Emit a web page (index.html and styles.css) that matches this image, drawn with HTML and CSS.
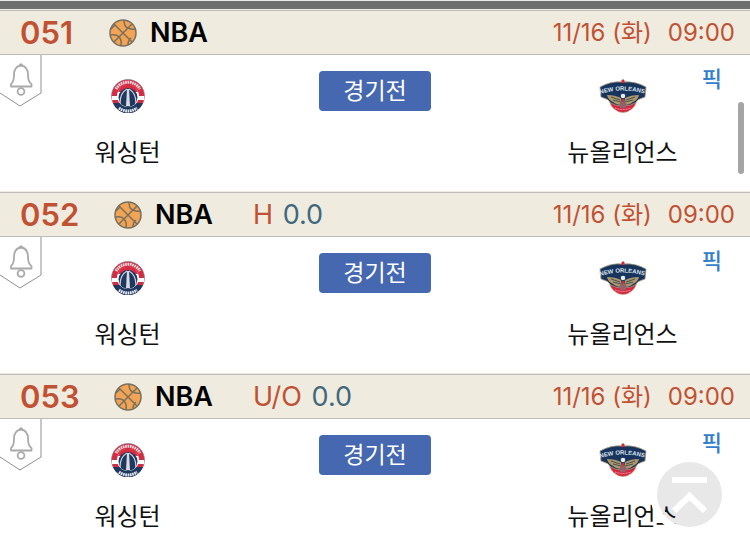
FILE: index.html
```html
<!DOCTYPE html>
<html lang="ko">
  <head>
    <meta charset="utf-8">
    <meta name="viewport" content="width=device-width, initial-scale=1">
    <title>NBA</title>
    <link rel="stylesheet" href="styles.css">
  </head>
  <body>
    <svg class="sprite" aria-hidden="true">
      <symbol id="ball" viewBox="0 0 28 28">
        <circle cx="14" cy="14" r="13" fill="#f2a353" stroke="#77705f" stroke-width="1.5"/>
        <path d="M5 5l18 18M23 5L5 23M15 1q0 7 4 8q4 2 8 1M1 16q7-1 9 2q3 3 2 9M2 10l4-4M19 26q0-5 3-7" fill="none" stroke="#77705f" stroke-width="1.5"/>
      </symbol>
      <symbol id="bell" viewBox="0 0 43 53">
        <path d="M0 38L20 51L41 38V0" fill="none" stroke="#909090" stroke-width="1"/>
        <path d="M11 31.500V29Q14 27 14 20C14 14 16 11 21 10.500C26 11 28 14 28 20Q28 27 31.500 29V31.500Z" fill="none" stroke="#aaa" stroke-width="1.800" stroke-linejoin="round"/>
        <path d="M19.500 10.500Q21 8 22.500 10.500" fill="none" stroke="#aaa" stroke-width="1.800"/>
        <circle cx="21" cy="36.500" r="3.400" fill="none" stroke="#aaa" stroke-width="1.800"/>
      </symbol>
      <symbol id="wizards" viewBox="0 0 34 34">
        <circle cx="17" cy="17" r="16.500" fill="#d52c42" stroke="#777b8c" stroke-width=".6"/>
        <path d="M.8 17h32.400v4H.8z" fill="#fff"/>
        <path d="M2 24h30a16 16 0 0 1-30 0z" fill="#20375f"/>
        <path d="M5 10a14 14 0 0 1 24 0" fill="none" stroke="#f5dfe3" stroke-width="3" stroke-dasharray="1.600 .7"/>
        <path d="M8 29a15 15 0 0 0 18 0" fill="none" stroke="#e4e8ef" stroke-width="3" stroke-dasharray="1.700 .6"/>
        <circle cx="17" cy="17" r="11" fill="#fff"/>
        <path d="M7 13a10.500 10.500 0 0 1 20 0z" fill="#d52c42"/>
        <circle cx="17" cy="18.500" r="9.500" fill="#20375f"/>
        <path d="M16 10Q9 14 9 24M18 10Q25 14 25 24" fill="none" stroke="#c8ced8" stroke-width="1.300"/>
        <path d="M16 10h2l1 17h-4z" fill="#d7dbe1"/>
      </symbol>
      <symbol id="pelicans" viewBox="0 0 48 34">
        <path d="M10 22q4 11 14 11.500Q34 33 38 22z" fill="#d72640" stroke="#b9a374" stroke-width=".6"/>
        <path d="M1 8Q12 2 23 3l1-3 1 3Q36 2 47 8l-1 10q-8 2-10 6-4 3-12 3t-12-3Q10 20 2 18z" fill="#17345e" stroke="#a99b78" stroke-width=".8"/>
        <path d="M8 16q8 0 14 3l1 7q-6 0-9-3-5-2-6-7M40 16q-8 0-14 3l-1 7q6 0 9-3 5-2 6-7" fill="#ae9764"/>
        <path d="M12 18l9 3M14 21l8 2M36 18l-9 3M34 21l-8 2" stroke="#17345e" stroke-width=".7"/>
        <path id="arch" d="M1 15Q24 8 47 15" fill="none"/>
        <text class="arch-text"><textPath href="#arch">NEW ORLEANS</textPath></text>
        <circle cx="24" cy="17" r="2.800" fill="#e8edf2" stroke="#17345e"/>
        <path d="M22.500 1h3v3h-3zM23 20h2v5h-2z" fill="#d72640"/>
        <circle cx="24" cy="26" r="3.500" fill="#96606a"/>
        <path d="M16 29q8 3 16 0" fill="none" stroke="#f3adb7" stroke-width="1" stroke-dasharray="1 .6"/>
      </symbol>
    </svg>

    <div class="topbar"></div>

    <main>
      <section class="game first">
        <header class="game-head">
          <strong class="number">051</strong>
          <svg class="ball"><use href="#ball"/></svg>
          <strong class="league">NBA</strong>
          <time class="date">11/16 (화)</time>
          <time class="time">09:00</time>
        </header>
        <div class="game-body">
          <button class="alarm" aria-label="알림"><svg><use href="#bell"/></svg></button>
          <div class="team home"><svg class="logo"><use href="#wizards"/></svg><span>워싱턴</span></div>
          <button class="status">경기전</button>
          <div class="team away"><svg class="logo"><use href="#pelicans"/></svg><span>뉴올리언스</span></div>
          <a class="pick" href="#">픽</a>
        </div>
      </section>

      <section class="game">
        <header class="game-head">
          <strong class="number">052</strong>
          <svg class="ball"><use href="#ball"/></svg>
          <strong class="league">NBA</strong>
          <span class="bet">H <span class="line">0.0</span></span>
          <time class="date">11/16 (화)</time>
          <time class="time">09:00</time>
        </header>
        <div class="game-body">
          <button class="alarm" aria-label="알림"><svg><use href="#bell"/></svg></button>
          <div class="team home"><svg class="logo"><use href="#wizards"/></svg><span>워싱턴</span></div>
          <button class="status">경기전</button>
          <div class="team away"><svg class="logo"><use href="#pelicans"/></svg><span>뉴올리언스</span></div>
          <a class="pick" href="#">픽</a>
        </div>
      </section>

      <section class="game">
        <header class="game-head">
          <strong class="number">053</strong>
          <svg class="ball"><use href="#ball"/></svg>
          <strong class="league">NBA</strong>
          <span class="bet">U/O <span class="line">0.0</span></span>
          <time class="date">11/16 (화)</time>
          <time class="time">09:00</time>
        </header>
        <div class="game-body">
          <button class="alarm" aria-label="알림"><svg><use href="#bell"/></svg></button>
          <div class="team home"><svg class="logo"><use href="#wizards"/></svg><span>워싱턴</span></div>
          <button class="status">경기전</button>
          <div class="team away"><svg class="logo"><use href="#pelicans"/></svg><span>뉴올리언스</span></div>
          <a class="pick" href="#">픽</a>
        </div>
      </section>
    </main>

    <div class="scroll-thumb"></div>
    <button class="to-top" aria-label="맨 위로">
      <svg viewBox="0 0 65 65"><path d="M15 18h35M17 49l15.500-15L48 49" fill="none" stroke="#fff" stroke-width="6"/></svg>
    </button>
  </body>
</html>
```
FILE: styles.css
```css
* {
  box-sizing: border-box;
}

body {
  margin: 0;
  background: #fff;
  color: #111;
  font-family: Inter, "Noto Sans CJK KR", sans-serif;
  font-size: 24px;
}

button {
  margin: 0;
  padding: 0;
  border: none;
  background: none;
  font: inherit;
}

svg {
  display: block;
}

.sprite {
  display: none;
}

.topbar {
  height: 9px;
  border-top: 1px solid #e8e8e8;
  background: #6d6f6e;
}

.game {
  border-top: 1px solid #efecdf;
}

.game-head {
  display: flex;
  align-items: center;
  height: 45px;
  padding: 0 15px 0 20px;
  border-top: 1px solid #bcbcbc;
  border-bottom: 1px solid #bcbcbc;
  background: #efecdf;
  line-height: 43px;
  white-space: nowrap;
}

.number {
  width: 94px;
  color: #c15133;
  font-size: 31px;
  font-weight: 600;
}

.first .number {
  width: 89px;
}

.ball {
  width: 28px;
  height: 28px;
}

.league {
  width: 111px;
  padding-left: 13px;
  color: #000;
  font-size: 27px;
  font-weight: 600;
}

.bet,
.date,
.time {
  color: #c15133;
}

.bet {
  font-size: 27px;
}

.line {
  margin-left: 2px;
  color: #41677d;
}

.date {
  margin-left: auto;
}

.time {
  margin-left: 16px;
}

.game-body {
  position: relative;
  display: grid;
  grid-template-columns: 1fr 112px 1fr;
  align-items: start;
  padding: 16px 0 20px;
}

.alarm {
  position: absolute;
  top: 0;
  left: 0;
}

.alarm svg {
  width: 43px;
  height: 53px;
}

.team {
  display: flex;
  flex-direction: column;
  align-items: center;
  gap: 22px;
  padding-top: 8px;
  line-height: 36px;
  white-space: nowrap;
}

.home {
  padding-right: 64px;
}

.away {
  padding-left: 64px;
}

.logo {
  width: 48px;
  height: 34px;
}

.arch-text {
  fill: #dce3eb;
  font-family: "Liberation Sans", sans-serif;
  font-size: 6px;
  font-weight: 700;
}

.status {
  height: 40px;
  border-radius: 4px;
  background: #4668b0;
  color: #fff;
  font-size: 23px;
  line-height: 40px;
}

.pick {
  position: absolute;
  top: 7px;
  right: 28px;
  color: #347ecc;
  font-size: 22px;
  font-weight: 500;
  line-height: 34px;
  text-decoration: none;
}

.scroll-thumb {
  position: fixed;
  top: 102px;
  right: 6px;
  width: 6px;
  height: 72px;
  border-radius: 3px;
  background: #a5a5a5;
}

/* see-through disc with a solid rim */
.to-top {
  position: fixed;
  right: 28px;
  bottom: 19px;
  width: 65px;
  height: 65px;
  border-radius: 50%;
  background: radial-gradient(circle, rgba(0, 0, 0, 0.09) 30px, #e8e8e8 30px);
  box-shadow: 0 0 0 7px #fff;
}
```
